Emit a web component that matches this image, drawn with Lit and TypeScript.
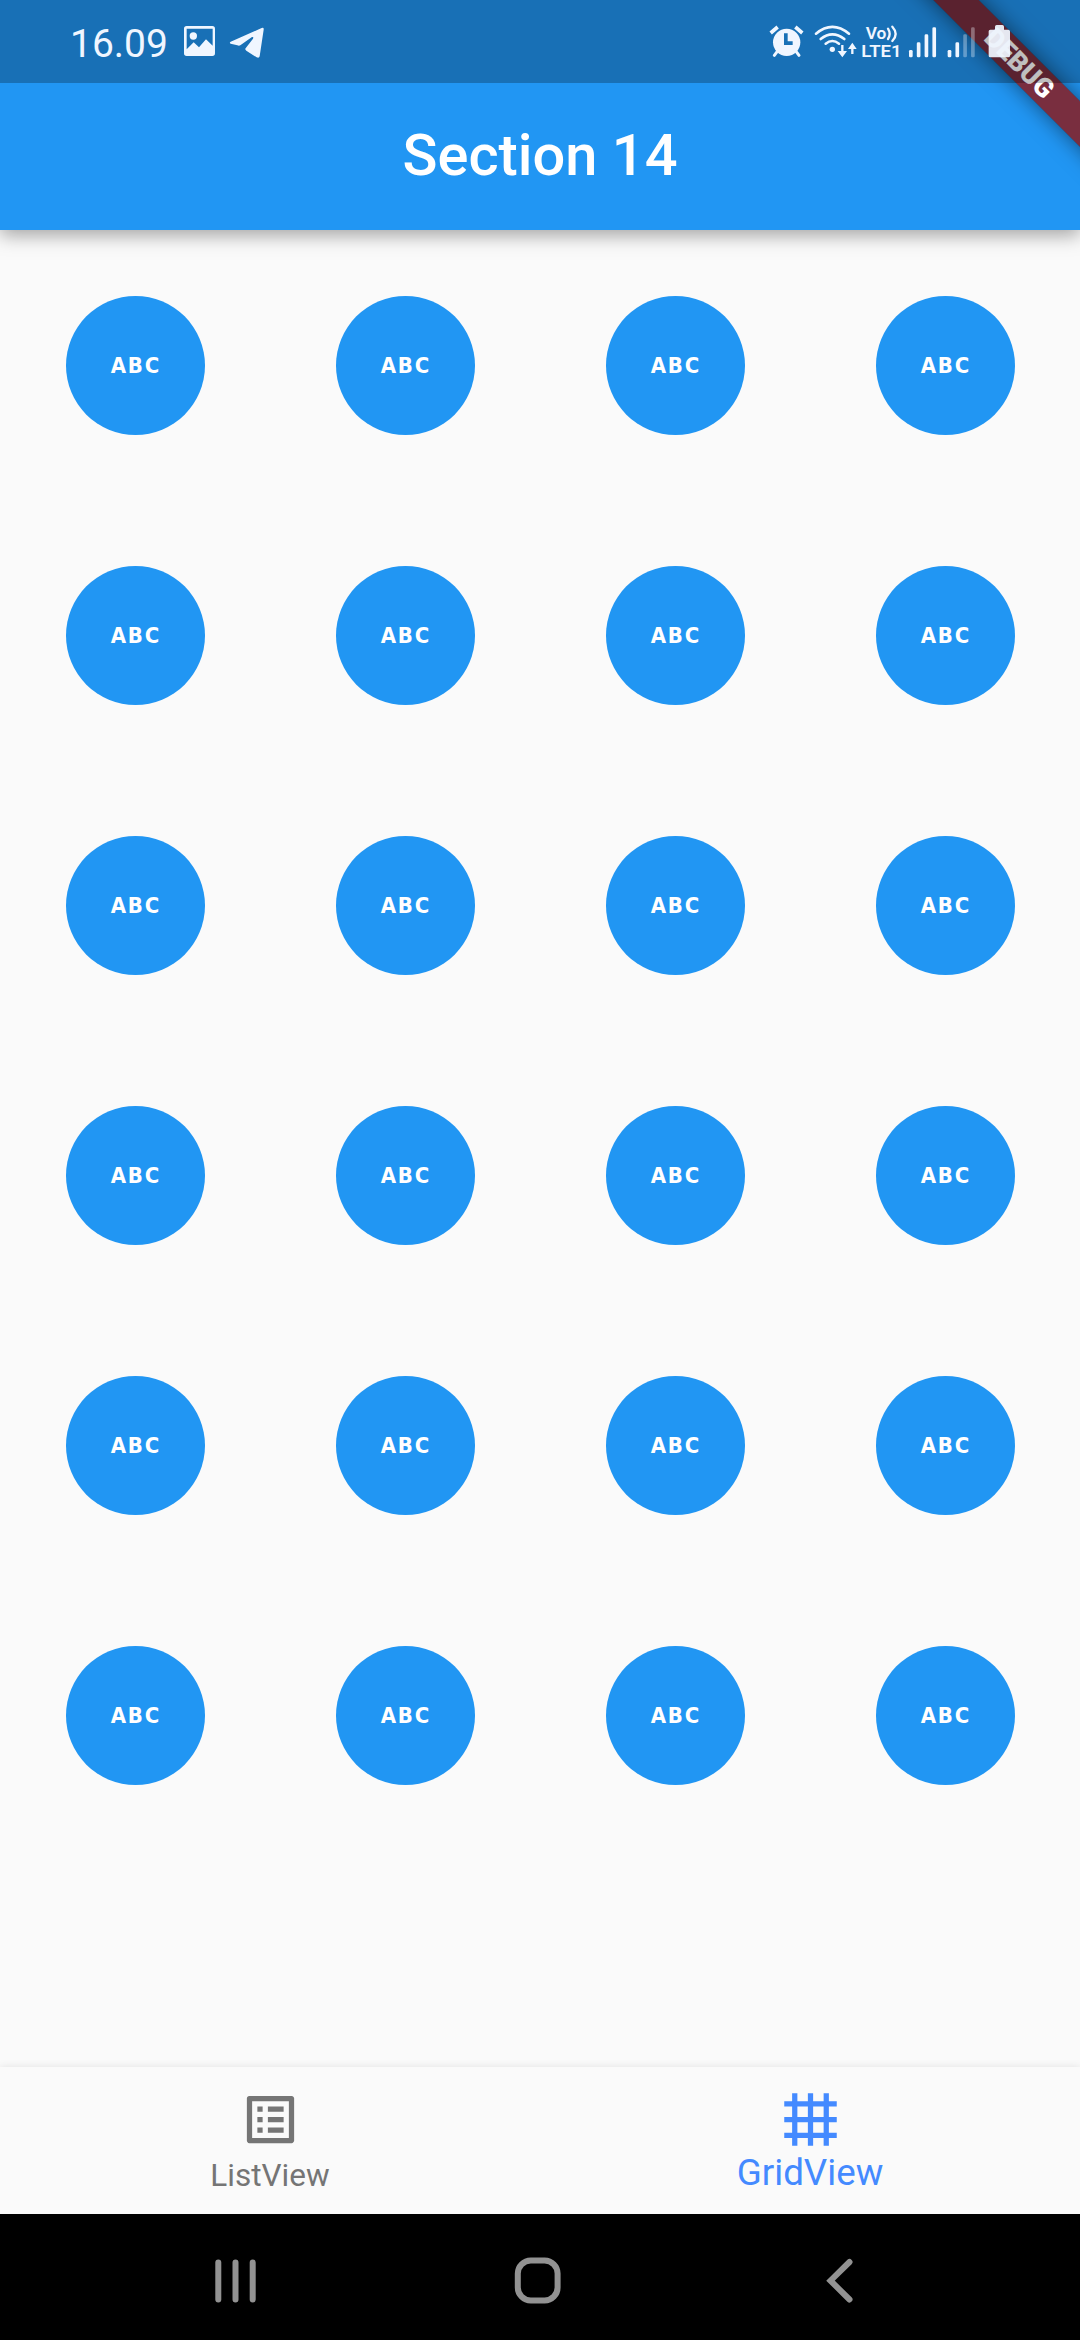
import { LitElement, html, css, svg } from "lit";
import { customElement } from "lit/decorators.js";

const slice = (x: number, w: number, body: unknown) =>
  html`<svg class="glyph" width=${w / 3} height="83" viewBox="${x} 0 ${w} 249">${body}</svg>`;

const bars = (x: number, dim: number) =>
  [150, 127, 103, 82].map(
    (top, i) => svg`<rect x=${x + i * 23.4} y=${top} width="11" height=${172 - top} rx="4" opacity=${i >= dim ? 0.35 : 1} />`
  );

@customElement("status-bar")
class StatusBar extends LitElement {
  static styles = css`
    :host {
      display: flex;
      align-items: center;
      justify-content: space-between;
      height: 83px;
      padding: 0 65px 0 70px;
      box-sizing: border-box;
      position: relative;
      z-index: 3;
      background: rgba(0, 0, 0, 0.25);
      color: #f0f6ff;
      font-family: Roboto, sans-serif;
    }
    .group {
      display: flex;
      align-items: center;
    }
    .time {
      width: 107px;
      font-size: 39px;
      line-height: 46px;
      padding-top: 4px;
      white-space: nowrap;
    }
    .glyph {
      display: block;
      fill: #f0f6ff;
      flex: none;
    }
    .line {
      fill: none;
      stroke: #f0f6ff;
      stroke-linecap: round;
    }
    .butt {
      stroke-linecap: butt;
    }
    .hand {
      fill: #1971b6;
    }
    .tag {
      font-weight: 600;
    }
  `;
  render() {
    return html`
      <div class="group">
        <div class="time">16.09</div>
        ${slice(381, 137, svg`
          <path fill-rule="evenodd" d="M410 78H487Q495 78 495 86V160Q495 168 487 168H410Q402 168 402 160V86Q402 78 410 78ZM410 86V148L431 127L447 142L468 118L488 137V86Z" />
          <circle cx="430" cy="108" r="11" />`)}
        ${slice(518, 140, svg`
          <path d="M541 125L634 84Q641 81 640 89L628 169Q626 176 619 172L588 152Q582 148 587 143L608 116Q611 110 605 111L570 136Q566 138 561 136L541 131Q536 128 541 125Z" />`)}
      </div>
      <div class="group">
        ${slice(50, 130, svg`
          <circle cx="109" cy="127" r="41" />
          <path class="line butt" stroke-width="11" d="M61 99L82 81M135 81L156 99" />
          <path class="line" stroke-width="9" d="M81 154L72 166M137 154L146 166" />
          <path class="hand" d="M101 100H112V124H127V135H101Z" />`)}
        ${slice(180, 150, svg`
          <path class="line" stroke-width="8" d="M198 101Q247 60 297 101M212 117Q247 89 283 117M227 131Q247 115 267 131" />
          <circle cx="247" cy="148" r="8" />
          <path class="line butt" stroke-width="7" d="M277 135V164M307 136V162" />
          <path d="M263 153H291L277 172ZM294 147H320L307 128Z" />`)}
        ${slice(330, 135, svg`
          <text class="tag" x="347" y="118" font-size="50" textLength="62" lengthAdjust="spacingAndGlyphs">Vo</text>
          <path class="line" stroke-width="7" d="M414 86Q424 102 414 117M427 80Q447 102 427 123" />
          <text class="tag" x="334" y="171" font-size="52" textLength="121" lengthAdjust="spacingAndGlyphs">LTE1</text>`)}
        ${slice(465, 115, bars(477, 4))}
        ${slice(580, 125, bars(594, 2))}
        ${slice(705, 90, svg`
          <path opacity=".93" d="M735 80Q735 75 740 75H757Q762 75 762 80V89H775Q780 89 780 94V167Q780 172 775 172H721Q716 172 716 167V94Q716 89 721 89H735Z" />`)}
      </div>
    `;
  }
}

@customElement("debug-ribbon")
class DebugRibbon extends LitElement {
  static styles = css`
    :host {
      position: absolute;
      top: 0;
      right: 0;
      width: 230px;
      height: 230px;
      overflow: hidden;
      z-index: 2;
      pointer-events: none;
    }
    .band {
      position: absolute;
      left: 18px;
      top: 46px;
      width: 300px;
      height: 32px;
      transform: rotate(45deg);
      background: rgba(183, 28, 28, 0.627);
      box-shadow: 0 0 21px rgba(0, 0, 0, 0.5);
    }
    .under {
      background: rgba(0, 0, 0, 0.5);
      box-shadow: none;
    }
    .word {
      color: #fff;
      font: 900 26.8px/32px Roboto, sans-serif;
      text-align: center;
      text-indent: 4px;
    }
  `;
  render() {
    return html`<div class="band under"></div>
      <div class="band word">DEBUG</div>`;
  }
}

@customElement("letter-avatar")
class LetterAvatar extends LitElement {
  static styles = css`
    :host {
      display: grid;
      place-items: center;
      width: 139px;
      height: 139px;
      border-radius: 50%;
      background: #2196f3;
    }
    .abc {
      color: #fff;
      font: 700 22px/22px "DejaVu Sans", sans-serif;
      letter-spacing: 2px;
      padding: 1px 0 0 2px;
      transform: scaleX(0.9);
    }
  `;
  render() {
    return html`<span class="abc">ABC</span>`;
  }
}

@customElement("app-root")
class AppRoot extends LitElement {
  static styles = css`
    :host {
      display: flex;
      flex-direction: column;
      position: relative;
      width: 1080px;
      height: 2340px;
      overflow: hidden;
      background: #fafafa;
      font-family: Roboto, sans-serif;
    }
    .top {
      flex: none;
      height: 230px;
      background: #2196f3;
      box-shadow: 0 5px 18px rgba(0, 0, 0, 0.36);
      position: relative;
    }
    .title {
      height: 143px;
      display: flex;
      align-items: center;
      justify-content: center;
      color: #fff;
      font-size: 57.75px;
      font-weight: 500;
      white-space: nowrap;
    }
    .cells {
      flex: 1;
      display: grid;
      grid-template-columns: repeat(4, 270px);
      grid-auto-rows: 270px;
      place-items: center;
      align-content: start;
    }
    .tabs {
      flex: none;
      height: 147px;
      display: grid;
      grid-template-columns: 1fr 1fr;
      background: #fafafa;
      box-shadow: 0 0 8px rgba(0, 0, 0, 0.1);
    }
    .tab {
      display: flex;
      flex-direction: column;
      align-items: center;
      padding-top: 21px;
      color: #757575;
      font-size: 31.5px;
      line-height: 44px;
    }
    .tab svg {
      display: block;
      width: 63px;
      height: 63px;
      fill: currentColor;
    }
    .label {
      padding-top: 3px;
    }
    .active {
      color: #448aff;
      font-size: 36.75px;
    }
    .active .label {
      padding-top: 0;
    }
    .system {
      flex: none;
      height: 126px;
      display: flex;
      background: #000;
    }
    .system svg {
      display: block;
      fill: none;
      stroke: #929292;
      stroke-width: 6;
      stroke-linecap: round;
    }
  `;
  render() {
    return html`
      <header class="top">
        <status-bar></status-bar>
        <div class="title">Section 14</div>
        <debug-ribbon></debug-ribbon>
      </header>
      <main class="cells">
        ${Array.from({ length: 24 }, () => html`<letter-avatar></letter-avatar>`)}
      </main>
      <nav class="tabs">
        <div class="tab">
          <svg viewBox="0 0 24 24"><path d="M19 5v14H5V5h14m1.1-2H3.9c-.5 0-.9.4-.9.9v16.2c0 .4.4.9.9.9h16.2c.4 0 .9-.5.9-.9V3.9c0-.5-.5-.9-.9-.9zM11 7h6v2h-6V7zm0 4h6v2h-6v-2zm0 4h6v2h-6zM7 7h2v2H7zm0 4h2v2H7zm0 4h2v2H7z" /></svg>
          <span class="label">ListView</span>
        </div>
        <div class="tab active">
          <svg viewBox="0 0 24 24"><path d="M22 7V5h-3V2h-2v3h-4V2h-2v3H7V2H5v3H2v2h3v4H2v2h3v4H2v2h3v3h2v-3h4v3h2v-3h4v3h2v-3h3v-2h-3v-4h3v-2h-3V7h3zM7 7h4v4H7V7zm0 10v-4h4v4H7zm10 0h-4v-4h4v4zm0-6h-4V7h4v4z" /></svg>
          <span class="label">GridView</span>
        </div>
      </nav>
      <footer class="system">
        <svg width="360" height="126" viewBox="0 0 360 126"><path d="M218.3 48.5V85.5M235.5 48.5V85.5M252.7 48.5V85.5" /></svg>
        <svg width="360" height="126" viewBox="360 0 360 126"><rect x="517.8" y="46.5" width="39.8" height="40" rx="13" /></svg>
        <svg width="360" height="126" viewBox="720 0 360 126"><path d="M849.5 48L830.5 66.7L849.5 85.5" /></svg>
      </footer>
    `;
  }
}
